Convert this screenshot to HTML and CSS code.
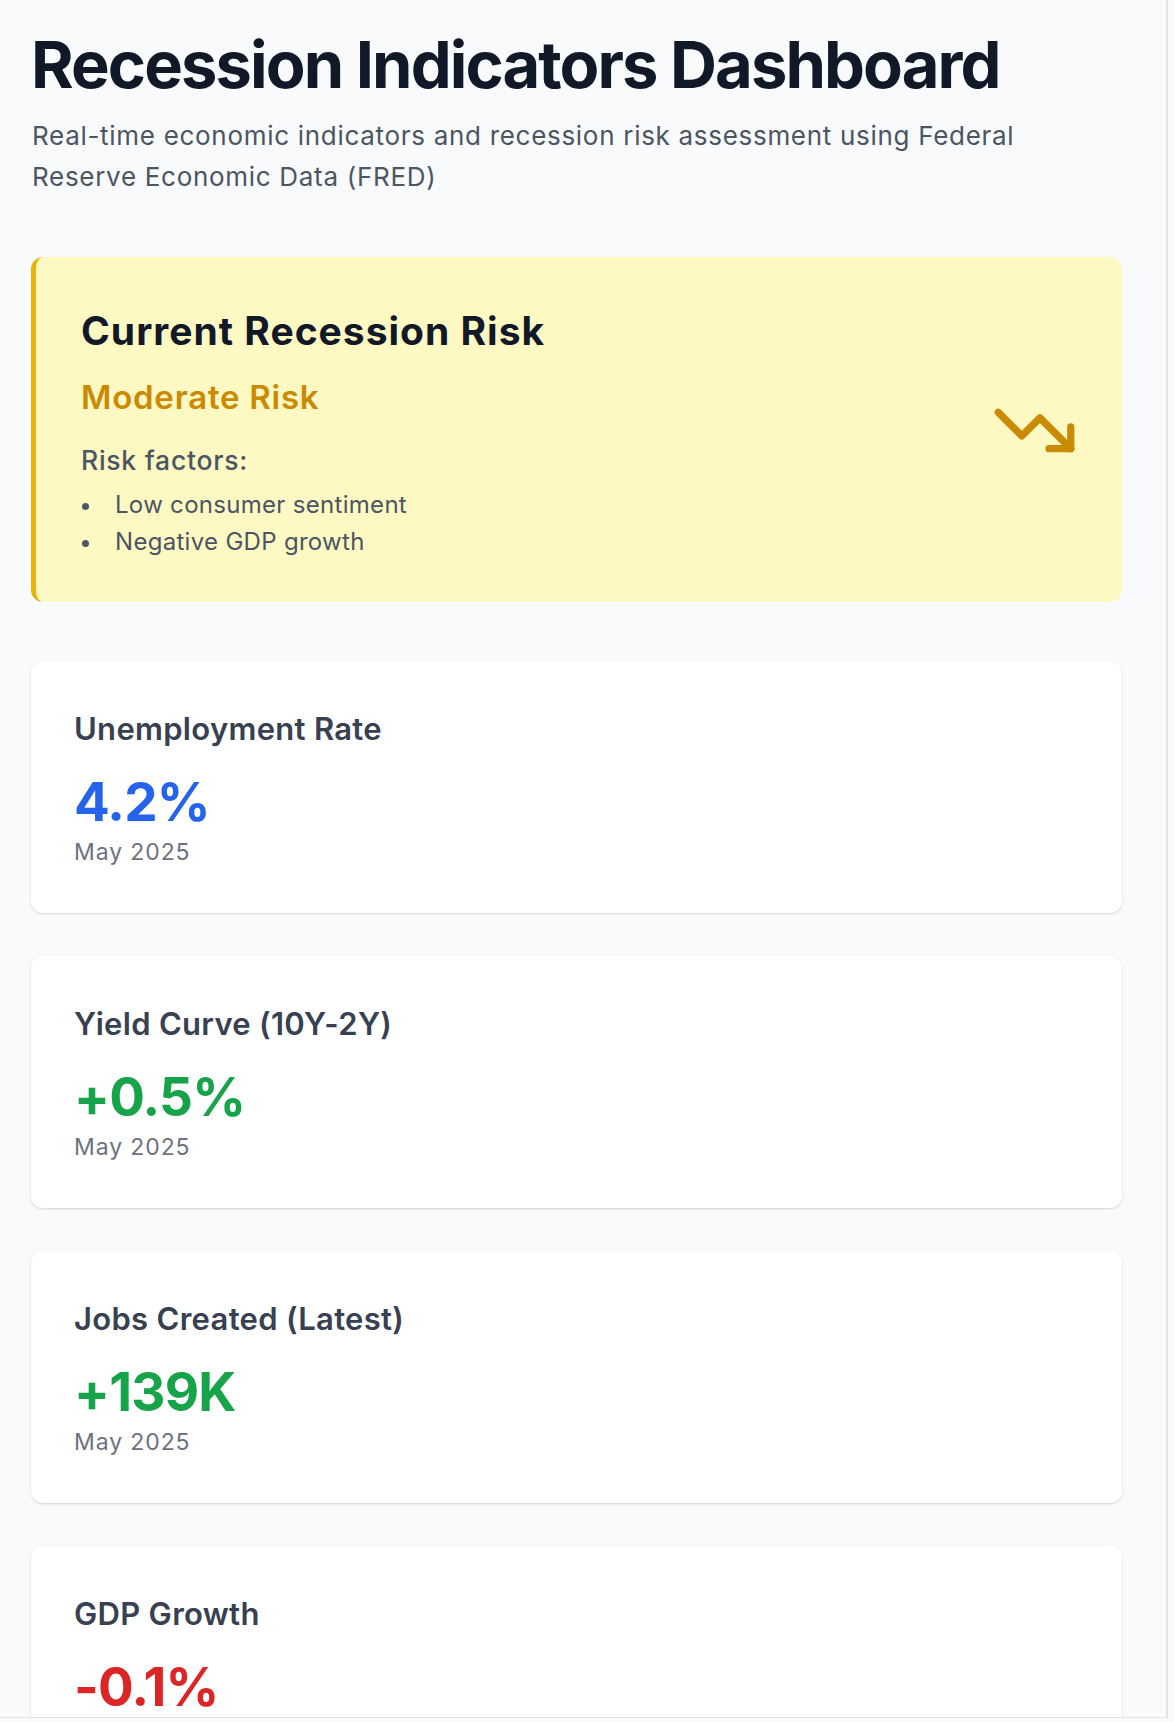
FILE: index.html
```html
<!DOCTYPE html>
<html lang="en">
<head>
<meta charset="utf-8">
<title>Recession Indicators Dashboard</title>
<link rel="stylesheet" href="styles.css">
</head>
<body>
<div class="frame">
  <main class="page">
    <header class="header">
      <h1 class="title">Recession Indicators Dashboard</h1>
      <p class="subtitle">Real-time economic indicators and recession risk assessment using Federal Reserve Economic Data (FRED)</p>
    </header>

    <section class="risk-card">
      <div class="risk-body">
        <h2 class="risk-title">Current Recession Risk</h2>
        <div class="risk-level">Moderate Risk</div>
        <div class="risk-factors-label">Risk factors:</div>
        <ul class="risk-list">
          <li class="risk-item">Low consumer sentiment</li>
          <li class="risk-item">Negative GDP growth</li>
        </ul>
      </div>
      <svg class="risk-icon" viewBox="0 0 24 24" fill="none" stroke="currentColor" stroke-width="2" stroke-linecap="round" stroke-linejoin="round">
        <polyline points="22 17 13.5 8.5 8.5 13.5 2 7"></polyline>
        <polyline points="16 17 22 17 22 11"></polyline>
      </svg>
    </section>

    <section class="metrics">
      <div class="metric-card">
        <h3 class="metric-label">Unemployment Rate</h3>
        <div class="metric-value value-blue">4.2%</div>
        <div class="metric-date">May 2025</div>
      </div>
      <div class="metric-card">
        <h3 class="metric-label">Yield Curve (10Y-2Y)</h3>
        <div class="metric-value value-green">+0.5%</div>
        <div class="metric-date">May 2025</div>
      </div>
      <div class="metric-card">
        <h3 class="metric-label">Jobs Created (Latest)</h3>
        <div class="metric-value value-green">+139K</div>
        <div class="metric-date">May 2025</div>
      </div>
      <div class="metric-card">
        <h3 class="metric-label">GDP Growth</h3>
        <div class="metric-value value-red">-0.1%</div>
      </div>
    </section>
  </main>
</div>
</body>
</html>
```

FILE: styles.css
```css
* {
  box-sizing: border-box;
}

html, body {
  margin: 0;
  padding: 0;
}

body {
  background: #f9fafb;
  font-family: Inter, "Noto Sans", "Liberation Sans", sans-serif;
  color: #111827;
}

.frame {
  width: 1168px;
  height: 1718px;
  border-right: 2px solid #e2e2e2;
  border-bottom: 1px solid #e2e2e2;
  overflow: hidden;
  background: #f9fafb;
}

.page {
  padding: 32px 44px 0 31px;
}

.header {
  margin-bottom: 60px;
}

.title {
  margin: 0;
  font-size: 65px;
  line-height: 65px;
  font-weight: 700;
  letter-spacing: -1.9px;
  color: #111827;
}

.subtitle {
  margin: 19px 0 0 1px;
  font-size: 26px;
  line-height: 40.7px;
  letter-spacing: 0.7px;
  color: #4b5563;
}

.risk-card {
  display: flex;
  align-items: center;
  justify-content: space-between;
  background: #fef9c3;
  border-left: 5px solid #eab308;
  border-radius: 12px;
  padding: 44px 44px 42px 45px;
  margin-bottom: 59px;
}

.risk-title {
  margin: 0;
  font-size: 39px;
  line-height: 59px;
  font-weight: 700;
  letter-spacing: 1px;
  color: #111827;
}

.risk-level {
  margin-top: 13px;
  font-size: 33px;
  line-height: 49.5px;
  font-weight: 600;
  letter-spacing: 0.75px;
  color: #ca8a04;
}

.risk-factors-label {
  margin-top: 17.7px;
  font-size: 26.5px;
  line-height: 39.75px;
  font-weight: 500;
  letter-spacing: 0.75px;
  color: #4b5563;
}

.risk-list {
  list-style: none;
  margin: 6.7px 0 0 0;
  padding: 0;
}

.risk-item {
  display: flex;
  align-items: center;
  font-size: 24px;
  line-height: 36.7px;
  letter-spacing: 0.3px;
  color: #4b5563;
}

.risk-item::before {
  content: "";
  width: 7px;
  height: 7px;
  border-radius: 50%;
  background: #4b5563;
  margin: 2px 26px 0 1px;
  flex: none;
}

.risk-icon {
  width: 87px;
  height: 87px;
  color: #ca8a04;
  flex: none;
}

.metrics {
  display: flex;
  flex-direction: column;
  gap: 43px;
}

.metric-card {
  background: #ffffff;
  border-radius: 12px;
  height: 252px;
  padding: 45px 45px 44px 43px;
  box-shadow: 0 1px 3px rgba(0, 0, 0, 0.1), 0 1px 2px rgba(0, 0, 0, 0.06);
}

.metric-label {
  margin: 0;
  font-size: 31px;
  line-height: 46.5px;
  font-weight: 600;
  letter-spacing: 0.3px;
  color: #374151;
}

.metric-value {
  margin-top: 22.7px;
  font-size: 53px;
  line-height: 53px;
  font-weight: 700;
  letter-spacing: -0.8px;
}

.value-blue { color: #2563eb; }
.value-green { color: #16a34a; }
.value-red { color: #dc2626; }

.metric-date {
  margin-top: 6.7px;
  font-size: 23px;
  line-height: 34px;
  letter-spacing: 0.9px;
  color: #6b7280;
}
```
